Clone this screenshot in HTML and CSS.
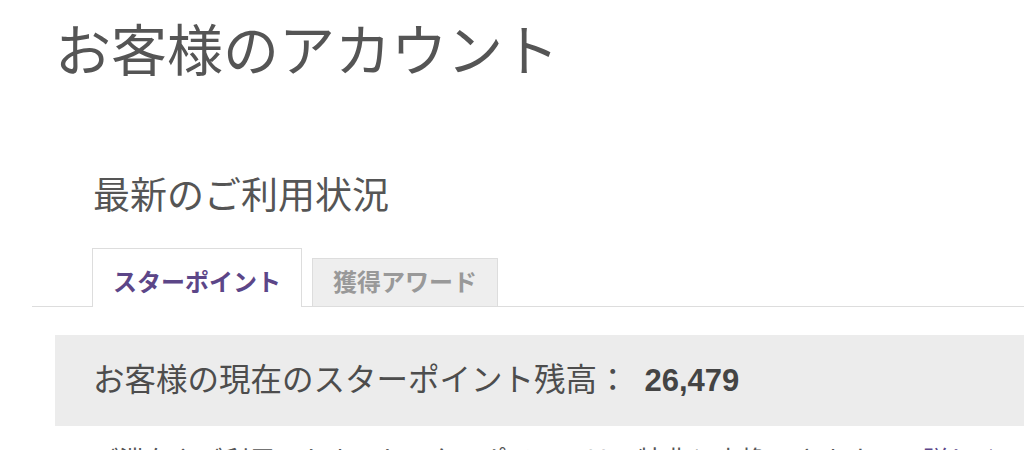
FILE: index.html
```html
<!DOCTYPE html>
<html lang="ja">
<head>
    <meta charset="UTF-8">
    <meta name="viewport" content="width=device-width, initial-scale=1.0">
    <title>お客様のアカウント</title>

    <link rel="stylesheet" href="styles.css">
</head>
<body>
    <div id = 'account'>
        <h1 class = 'page-title'>お客様のアカウント</h1>

        <div class = 'usage'>
            <h2 class = 'usage-title'>最新のご利用状況</h2>

            <ul class = 'tabs'>
                <li class = 'tab active'>スターポイント</li>
                <li class = 'tab'>獲得アワード</li>
            </ul>

            <div class = 'balance'>
                お客様の現在のスターポイント残高：<span class = 'balance-num'>26,479</span>
            </div>

            <p class = 'note'>ご滞在やご利用でたまったスターポイントは、特典と交換できます。<a href="#">詳しく</a></p>
        </div>
    </div>
</body>
</html>
```

FILE: styles.css
```css
*{
    margin: 0;
    padding: 0;
}

body{
    font-family: "Liberation Sans", "Noto Sans CJK JP", sans-serif;
    color: #555;
    background: #fff;
    overflow: hidden;
}

#account{
    padding-top: 19px;
}

.page-title{
    margin-left: 55px;
    font-size: 56px;
    line-height: 66px;
    font-weight: normal;
    color: #555;
}

.usage{
    margin-top: 90px;
}

.usage-title{
    margin-left: 93px;
    font-size: 37px;
    line-height: 44px;
    font-weight: normal;
    color: #555;
}

.tabs{
    list-style: none;
    display: flex;
    align-items: flex-end;
    gap: 10px;
    margin: 29px 0 0 32px;
    padding-left: 60px;
    border-bottom: 1px solid #ddd;
}

.tab{
    font-size: 24px;
    line-height: 24px;
    font-weight: bold;
    color: #999;
    background: #eee;
    border: 1px solid #ddd;
    padding: 12px 20px 11px;
    margin-bottom: -1px;
    cursor: pointer;
}

.tabs .active{
    color: #5c4688;
    background: #fff;
    border-bottom: none;
    padding: 22px 20px 12px;
}

.balance{
    margin: 28px 0 0 55px;
    padding: 26px 38px;
    background: #ececec;
    font-size: 31.5px;
    line-height: 38px;
    color: #4d4d4d;
}

.balance-num{
    margin-left: 16px;
    font-weight: bold;
    font-size: 31px;
    color: #444;
}

.note{
    margin: 17px 0 0 93px;
    font-size: 26px;
    line-height: 36px;
    white-space: nowrap;
    color: #555;
}

.note a{
    margin-left: 28px;
    color: #5c4688;
    text-decoration: none;
}
```
